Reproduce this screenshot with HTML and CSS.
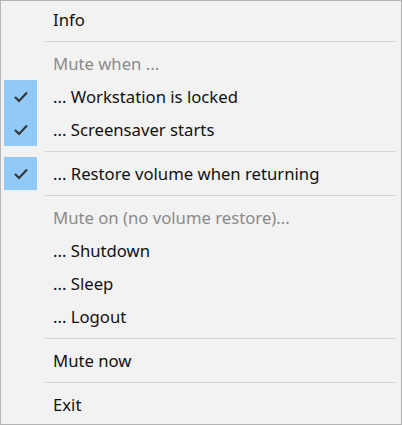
FILE: index.html
```html
<!DOCTYPE html>
<html lang="en">
<head>
  <meta charset="UTF-8">
  <title>Tray menu</title>
  <link rel="stylesheet" href="styles.css">
</head>
<body>
  <div id="menu">
    <div class="item">Info</div>
    <div class="sep"></div>
    <div class="item disabled">Mute when ...</div>
    <div class="item checked"><span class="check"><svg width="16" height="13" viewBox="0 0 16 13"><path d="M2 7 L6 11 L14 2.5" fill="none" stroke="#333" stroke-width="2"/></svg></span>... Workstation is locked</div>
    <div class="item checked"><span class="check"><svg width="16" height="13" viewBox="0 0 16 13"><path d="M2 7 L6 11 L14 2.5" fill="none" stroke="#333" stroke-width="2"/></svg></span>... Screensaver starts</div>
    <div class="sep"></div>
    <div class="item checked"><span class="check"><svg width="16" height="13" viewBox="0 0 16 13"><path d="M2 7 L6 11 L14 2.5" fill="none" stroke="#333" stroke-width="2"/></svg></span>... Restore volume when returning</div>
    <div class="sep"></div>
    <div class="item disabled">Mute on (no volume restore)...</div>
    <div class="item">... Shutdown</div>
    <div class="item">... Sleep</div>
    <div class="item">... Logout</div>
    <div class="sep"></div>
    <div class="item">Mute now</div>
    <div class="sep"></div>
    <div class="item">Exit</div>
  </div>
</body>
</html>
```

FILE: styles.css
```css
body {
  margin: 0;
  font-family: "Noto Sans", "Open Sans", sans-serif;
  background: #f2f2f2;
}

#menu {
  width: 402px;
  height: 425px;
  border: 1px solid #b4b4b4;
  background: #f2f2f2;
  padding-top: 2px;
  box-sizing: border-box;
}

.item {
  position: relative;
  height: 33px;
  line-height: 33px;
  padding-left: 52px;
  font-size: 16.7px;
  color: #111;
}

.disabled {
  color: #8a8a8a;
}

.check {
  position: absolute;
  left: 3px;
  top: 0;
  width: 33px;
  height: 33px;
  background: #91c9f7;
  display: flex;
  align-items: center;
  justify-content: center;
}

.sep {
  height: 11px;
  margin: 0 5px 0 44px;
  display: flex;
  align-items: center;
}

.sep::before {
  content: "";
  flex: 1;
  border-top: 1px solid #d5d5d5;
}
```
